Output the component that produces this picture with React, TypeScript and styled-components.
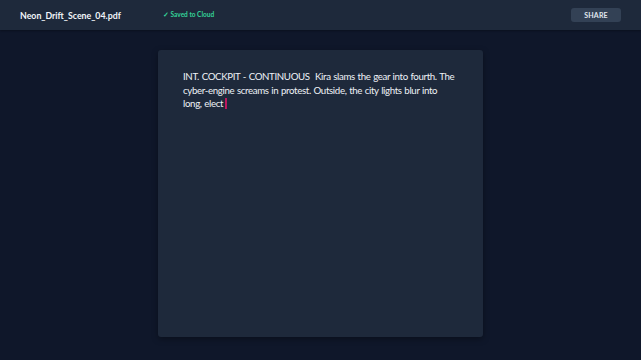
import styled, { createGlobalStyle } from "styled-components";

const GlobalStyle = createGlobalStyle`
  html, body {
    margin: 0;
    padding: 0;
    background: #0f172a;
  }
  body {
    font-family: Lato, "Noto Sans", sans-serif;
  }
`;

const Page = styled.div`
  width: 641px;
  height: 360px;
  display: flex;
  flex-direction: column;
  background: #0f172a;
  overflow: hidden;
`;

const TopBar = styled.header`
  height: 30px;
  flex-shrink: 0;
  display: flex;
  align-items: center;
  padding: 0 20px;
  background: #1e293b;
  box-shadow: 0 1px 2px rgba(0, 0, 0, 0.3);
`;

const FileName = styled.span`
  width: 143px;
  font-size: 8.8px;
  font-weight: 700;
  color: #f1f5f9;
`;

const SavedBadge = styled.span`
  font-size: 6.5px;
  font-weight: 700;
  color: #34d399;
`;

const ShareButton = styled.button`
  margin-left: auto;
  width: 50px;
  height: 14px;
  padding: 0;
  border: none;
  border-radius: 3px;
  background: #334155;
  color: #e2e8f0;
  font-family: Lato, sans-serif;
  font-size: 7px;
  font-weight: 700;
  letter-spacing: 0.2px;
`;

const Main = styled.main`
  flex: 1;
  display: flex;
  justify-content: center;
  padding: 20px 0 23px;
`;

const Sheet = styled.div`
  width: 325px;
  padding: 20px 25px;
  box-sizing: border-box;
  border-radius: 3px;
  background: #1e293b;
  box-shadow: 0 2px 6px rgba(0, 0, 0, 0.35);
`;

const Script = styled.p`
  margin: 0;
  font-size: 9.7px;
  line-height: 13.5px;
  color: #eef2f7;
  letter-spacing: -0.35px;
  word-spacing: 0.5px;
`;

const Caret = styled.span`
  display: inline-block;
  width: 2px;
  height: 11px;
  margin-left: 2px;
  vertical-align: -2px;
  background: #be185d;
`;

export default function App() {
  return (
    <>
      <GlobalStyle />
      <Page>
        <TopBar>
          <FileName>Neon_Drift_Scene_04.pdf</FileName>
          <SavedBadge>✓ Saved to Cloud</SavedBadge>
          <ShareButton>SHARE</ShareButton>
        </TopBar>
        <Main>
          <Sheet>
            <Script>
              INT. COCKPIT - CONTINUOUS&nbsp; Kira slams the gear into fourth. The
              cyber-engine screams in protest. Outside, the city lights blur into
              long, elect
              <Caret />
            </Script>
          </Sheet>
        </Main>
      </Page>
    </>
  );
}
